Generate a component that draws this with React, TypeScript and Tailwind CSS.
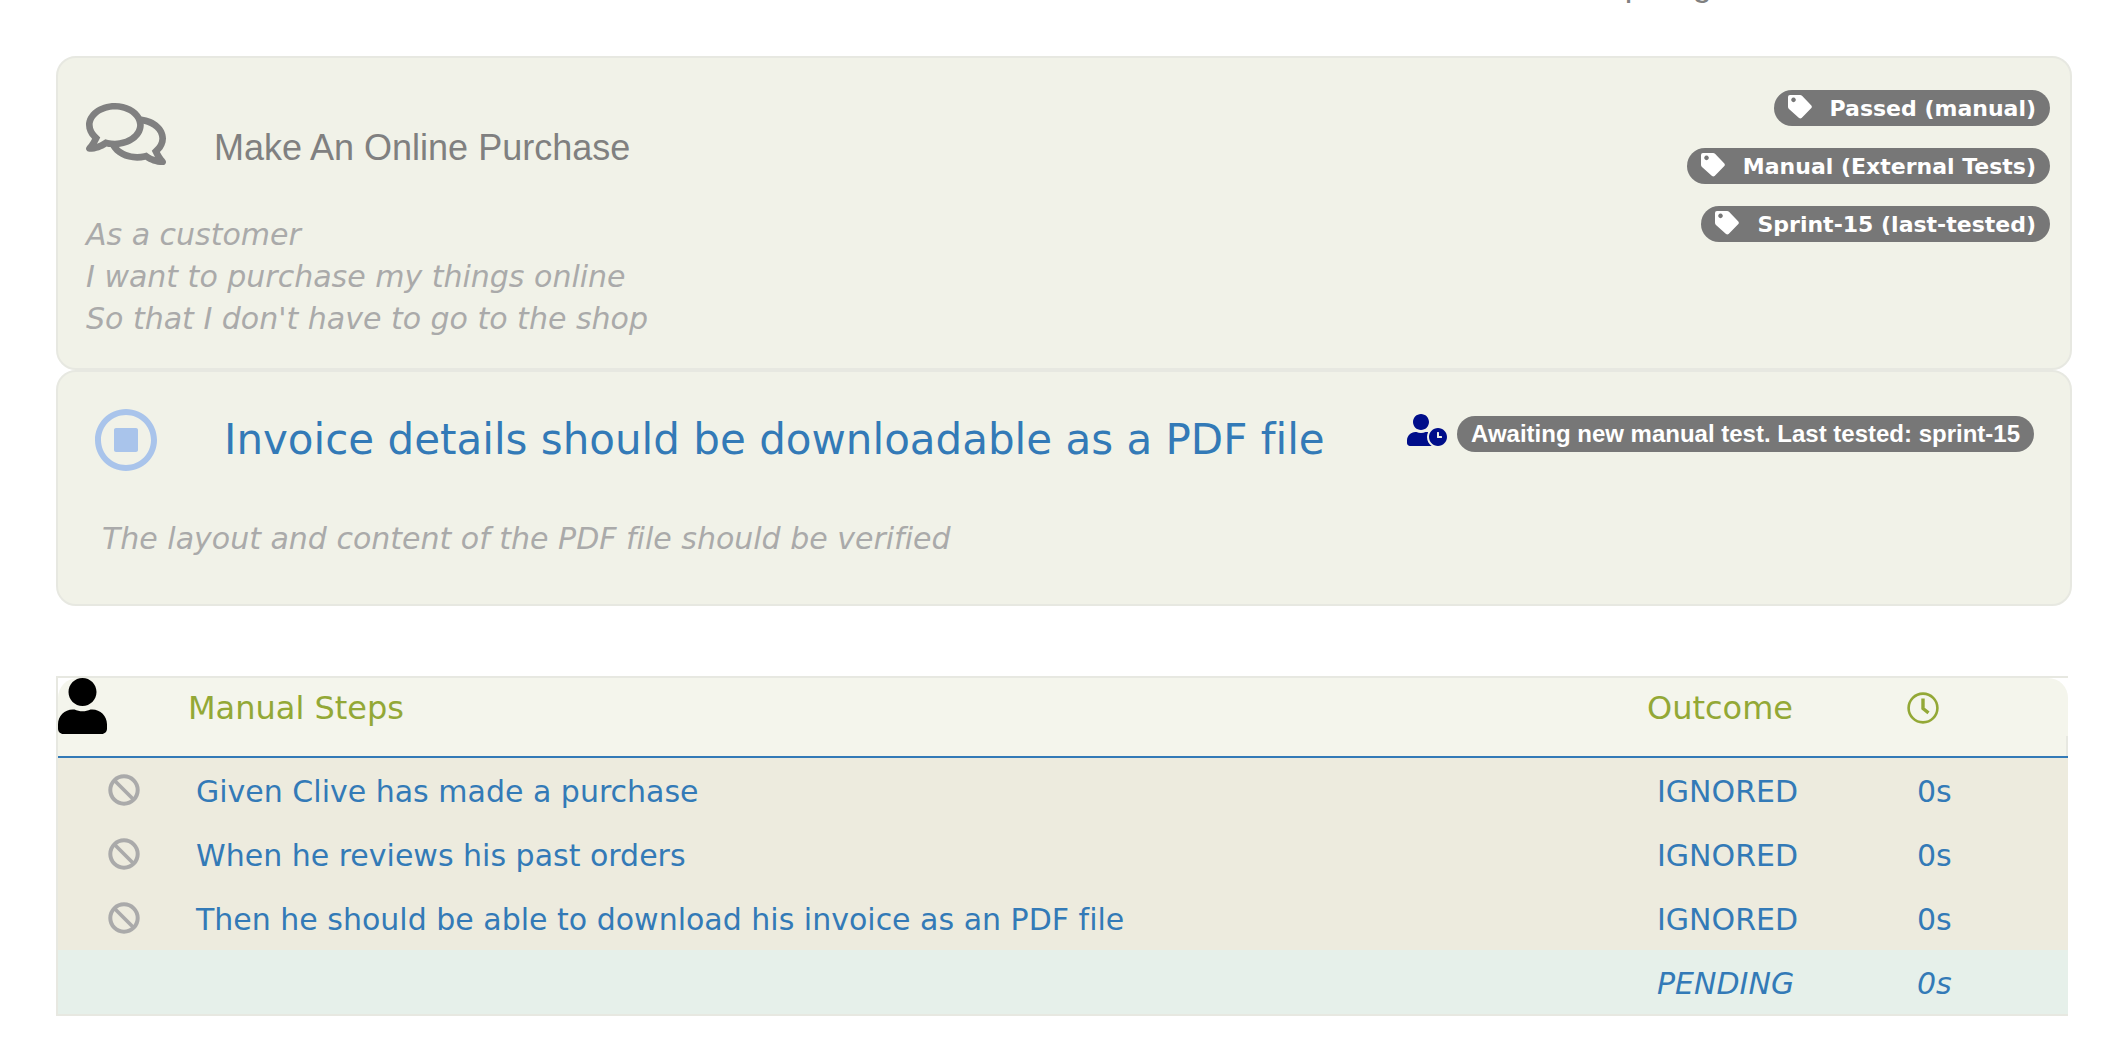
import { FaRegComments, FaUserClock, FaUser, FaRegStopCircle } from "react-icons/fa";

const tags = ["Passed (manual)", "Manual (External Tests)", "Sprint-15 (last-tested)"];

const steps = [
  "Given Clive has made a purchase",
  "When he reviews his past orders",
  "Then he should be able to download his invoice as an PDF file",
];

function TagIcon() {
  return (
    <svg viewBox="0 0 74 74" className="mr-[18px] mb-0.5 size-6" fill="currentColor" aria-hidden="true">
      <path
        fillRule="evenodd"
        d="M6 0H37q4 0 7 3L72 32q3 4 0 8L42 71q-4 3 -8 0L3 43q-3-3-3-7V6q0-6 6-6zM17 8a7 7 0 1 0 0.010 0z"
      />
    </svg>
  );
}

function ClockIcon() {
  return (
    <svg viewBox="0 0 32 32" className="size-8" fill="none" stroke="currentColor" role="img" aria-label="Duration">
      <circle cx="16" cy="16" r="14.400" strokeWidth="2.600" />
      <path d="M16 6.500V16.500L21.500 20.800" strokeWidth="3.400" />
    </svg>
  );
}

function IgnoredIcon() {
  return (
    <svg viewBox="0 0 32 32" className="size-8 text-[#aaaaaa]" fill="none" stroke="currentColor" role="img" aria-label="Ignored">
      <circle cx="16" cy="16" r="13.700" strokeWidth="4" />
      <path d="M6.500 6.500L25.500 25.500" strokeWidth="3.800" />
    </svg>
  );
}

function StoryCard() {
  return (
    <section className="flex min-h-[314px] justify-between rounded-[20px] border-2 border-[#e7e8e1] bg-[#f1f2e8] pt-8 pr-5 pl-7">
      <div>
        <div className="flex">
          <FaRegComments className="mt-1 size-20 text-[#808080]" />
          <h2 className="mt-[38px] ml-12 font-['Liberation_Sans',sans-serif] text-[36px] leading-10 text-[#808080]">
            Make An Online Purchase
          </h2>
        </div>
        <p className="mt-10 text-[30px] leading-[42px] text-[#aaaaaa] italic">
          As a customer
          <br />
          I want to purchase my things online
          <br />
          So that I don't have to go to the shop
        </p>
      </div>
      <ul className="flex flex-col items-end gap-[22px]">
        {tags.map((tag) => (
          <li key={tag} className="flex h-9 items-center rounded-full bg-[#777777] px-3.5 text-[22px] font-bold text-white">
            <TagIcon />
            {tag}
          </li>
        ))}
      </ul>
    </section>
  );
}

function ScenarioCard() {
  return (
    <section className="min-h-[236px] rounded-[20px] border-2 border-[#e7e8e1] bg-[#f1f2e8] px-9 pt-9">
      <div className="flex">
        <FaRegStopCircle className="size-16 text-[#a9c4eb]" />
        <h3 className="mt-1.5 ml-[66px] text-[42px] leading-[52px] text-[#337ab7]">
          Invoice details should be downloadable as a PDF file
        </h3>
        <div className="mt-2 ml-auto flex h-9 items-center gap-2.5">
          <FaUserClock className="mb-2 size-10 text-[#000e8a]" />
          <span className="flex h-9 items-center rounded-full bg-[#777777] px-3.5 font-['Liberation_Sans',sans-serif] text-[24px] font-bold text-white">
            Awaiting new manual test. Last tested: sprint-15
          </span>
        </div>
      </div>
      <p className="mt-[46px] ml-2 text-[30px] leading-[42px] text-[#aaaaaa] italic">
        The layout and content of the PDF file should be verified
      </p>
    </section>
  );
}

function StepsTable() {
  return (
    <div className="mt-[70px] mr-1 border-y-2 border-l-2 border-[#e7e8e1]">
      <table className="w-full table-fixed border-separate border-spacing-0 text-left text-[30px] leading-10 text-[#337ab7]">
        <colgroup>
          <col className="w-[122px]" />
          <col />
          <col className="w-[260px]" />
          <col className="w-[161px]" />
        </colgroup>
        <thead>
          <tr className="h-20 align-top text-[32px] text-[#93a836]">
            <th scope="col" className="rounded-tl-[20px] border-b-2 border-[#337ab7] bg-[#f4f5ec]">
              <FaUser className="h-14 w-[49px] text-black" aria-label="Manual" />
            </th>
            <th scope="col" className="border-b-2 border-[#337ab7] bg-[#f4f5ec] pt-2.5 pl-2 font-normal">Manual Steps</th>
            <th scope="col" className="border-b-2 border-[#337ab7] bg-[#f4f5ec] pt-2.5 font-normal">Outcome</th>
            <th
              scope="col"
              className="relative rounded-tr-[20px] border-b-2 border-[#337ab7] bg-[#f4f5ec] pt-3.5 after:absolute after:right-0 after:bottom-0 after:h-5 after:w-0.5 after:bg-[#e7e8e1]"
            >
              <ClockIcon />
            </th>
          </tr>
        </thead>
        <tbody>
          {steps.map((step) => (
            <tr key={step} className="h-16 bg-[#edebde]">
              <td className="pl-[50px]"><IgnoredIcon /></td>
              <td className="pt-1 pl-4"><a href="#">{step}</a></td>
              <td className="pt-1 pl-2.5">IGNORED</td>
              <td className="pt-1 pl-2.5">0s</td>
            </tr>
          ))}
          <tr className="h-16 bg-[#e6f0ea] italic">
            <td />
            <td />
            <td className="pt-1 pl-2.5">PENDING</td>
            <td className="pt-1 pl-2.5">0s</td>
          </tr>
        </tbody>
      </table>
    </div>
  );
}

export default function App() {
  return (
    <div className="bg-white pr-[30px] pb-11 pl-14 font-['DejaVu_Sans',sans-serif] [font-variant-ligatures:none]">
      <header className="flex h-14 justify-end overflow-hidden pr-[226px]">
        <p className="-mt-9 font-['Liberation_Sans',sans-serif] text-[34px] leading-10 text-[#808080]">Report generated</p>
      </header>
      <main>
        <StoryCard />
        <ScenarioCard />
        <StepsTable />
      </main>
    </div>
  );
}
